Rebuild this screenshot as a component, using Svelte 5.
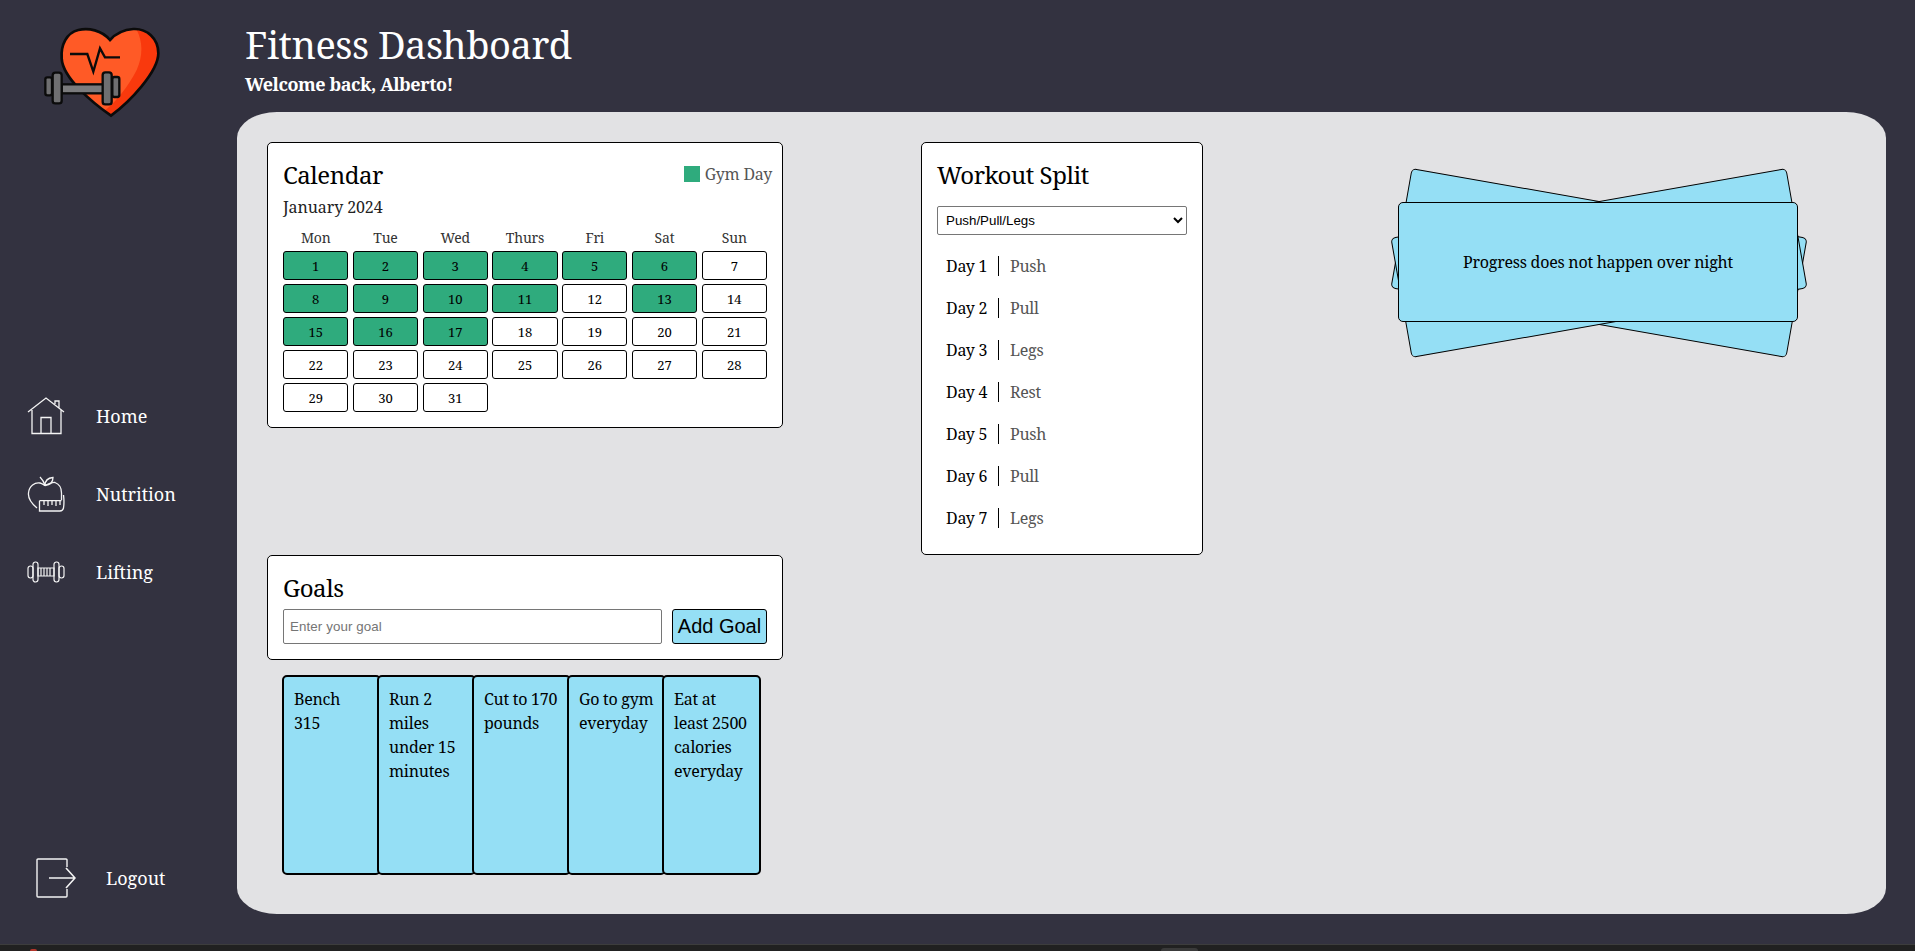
<script>
  const days = Array.from({ length: 31 }, (_, i) => i + 1);
  const gym = [1, 2, 3, 4, 5, 6, 8, 9, 10, 11, 13, 15, 16, 17];
  const heads = ['Mon', 'Tue', 'Wed', 'Thurs', 'Fri', 'Sat', 'Sun'];
  const split = ['Push', 'Pull', 'Legs', 'Rest', 'Push', 'Pull', 'Legs'];
  const goals = ['Bench 315', 'Run 2 miles under 15 minutes', 'Cut to 170 pounds', 'Go to gym everyday', 'Eat at least 2500 calories everyday'];
</script>

<div class="page">
  <aside class="side">
    <svg class="logo" viewBox="0 0 450 345" aria-label="Fitness logo">
      <path d="M240,75 C215,45 175,38 145,45 C110,53 92,90 95,130 C98,190 190,265 243,302 C300,260 385,170 385,115 C385,70 350,40 310,42 C280,44 255,58 240,75Z" fill="#ff5a26"/>
      <path d="M320,44 C338,80 340,120 320,165 C295,215 255,265 222,288 L243,302 C300,260 385,170 385,115 C385,75 355,45 320,44Z" fill="#f9390d"/>
      <path d="M240,75 C215,45 175,38 145,45 C110,53 92,90 95,130 C98,190 190,265 243,302 C300,260 385,170 385,115 C385,70 350,40 310,42 C280,44 255,58 240,75Z" fill="none" stroke="#0b0b0b" stroke-width="8"/>
      <path d="M120,117 H172 L190,170 L210,100 L225,127 H270" fill="none" stroke="#0b0b0b" stroke-width="7"/>
      <g fill="#6f6f71" stroke="#0b0b0b" stroke-width="7">
        <rect x="95" y="208" width="125" height="27" fill="#7b7b7d"/>
        <rect x="46" y="187" width="20" height="54" rx="6"/>
        <rect x="68" y="173" width="27" height="92" rx="8"/>
        <rect x="218" y="172" width="27" height="96" rx="8"/>
        <rect x="247" y="186" width="21" height="60" rx="6"/>
      </g>
    </svg>
    <nav class="nav">
      <a class="item">
        <svg viewBox="0 0 38 38" fill="none" stroke="#f4f4f4" stroke-width="1.3">
          <path d="M1,15 L19,1 L37,15 M5,13 V36.5 H34 V13 M14,36.5 V20.5 H24 V36.5 M28,7 V4 H32 V11"/>
        </svg>
        <span>Home</span>
      </a>
      <a class="item">
        <svg viewBox="0 0 38 38" fill="none" stroke="#f4f4f4" stroke-width="1.3">
          <path d="M10,33 C3,27 1,22 1.5,18 C2,11 8,7 13,8 C15,8.5 17,10 18,10.5 C20,9.5 24,7 28,7.5 C32,9 34.5,13 34.5,18 V25"/>
          <path d="M13,2 C15,4 17,7 18,10.5 C18,6 21,3 26,2.5 C26,7 23,10 18,10.5"/>
          <path d="M12.5,25.7 H34.5 M36.5,20 C37,24 37,30 36.5,33 C36,35 35,36 33,36 H12.5 V25.7 M17,25.7 V30 M21,25.7 V31 M25,25.7 V30 M29,25.7 V31 M33,25.7 V30"/>
        </svg>
        <span>Nutrition</span>
      </a>
      <a class="item">
        <svg viewBox="0 0 38 24" fill="none" stroke="#f4f4f4" stroke-width="1.2">
          <path d="M11,8 H27 V16 H11 Z M14,8 V16 M17,8 V16 M20,8 V16 M23,8 V16"/>
          <rect x="6" y="2" width="5" height="20" rx="2.4"/>
          <rect x="27" y="2" width="5" height="20" rx="2.4"/>
          <rect x="1" y="6" width="5" height="12" rx="2.4"/>
          <rect x="32" y="6" width="5" height="12" rx="2.4"/>
        </svg>
        <span>Lifting</span>
      </a>
    </nav>
    <a class="item logout">
      <svg viewBox="0 0 40 40" fill="none" stroke="#f4f4f4" stroke-width="1.4">
        <path d="M31,9 V2 Q31,1 30,1 H2 Q1,1 1,2 V38 Q1,39 2,39 H30 Q31,39 31,38 V31"/>
        <path d="M13,20 H39 M30,10 L39,20 L30,30" stroke-width="1.6"/>
      </svg>
      <span>Logout</span>
    </a>
  </aside>

  <div class="content">
    <header class="head">
      <h1>Fitness Dashboard</h1>
      <p>Welcome back, Alberto!</p>
    </header>
    <main class="panel">
      <section class="card calendar">
        <div class="calhead">
          <h2>Calendar</h2>
          <div class="legend"><i></i>Gym Day</div>
        </div>
        <div class="month">January 2024</div>
        <div class="grid">
          {#each heads as h}<div class="dow">{h}</div>{/each}
          {#each days as d}<div class="day" class:on={gym.includes(d)}>{d}</div>{/each}
        </div>
      </section>

      <section class="card split">
        <h2>Workout Split</h2>
        <select class="sel"><option>Push/Pull/Legs</option></select>
        <ul>
          {#each split as s, i}
            <li><b>Day {i + 1}</b><span>{s}</span></li>
          {/each}
        </ul>
      </section>

      <div class="quote">
        <div class="q a"></div>
        <div class="q b"></div>
        <div class="q top">Progress does not happen over night</div>
      </div>

      <div class="goalcol">
        <section class="card goals">
          <h2>Goals</h2>
          <div class="form">
            <input placeholder="Enter your goal" />
            <button>Add Goal</button>
          </div>
        </section>
        <div class="notes">
          {#each goals as g}<div class="note">{g}</div>{/each}
        </div>
      </div>
    </main>
  </div>
  <div class="strip"><i class="red"></i><i class="tab"></i></div>
</div>

<style>
  :global(body) { margin: 0; background: #333240; overflow: hidden; }
  * { box-sizing: border-box; }
  .page {
    width: 1915px; height: 951px; display: grid;
    grid-template-columns: 237px 1fr; grid-template-rows: 944px 7px;
    font-family: "Noto Serif", "DejaVu Serif", serif; color: #000;
  }
  .side { display: flex; flex-direction: column; padding: 15px 0 0 0; color: #fff; }
  .logo { display: block; width: 150px; height: 115px; margin-left: 30px; filter: blur(0.4px); }
  .nav { display: flex; flex-direction: column; margin-top: 267px; }
  .item { display: flex; align-items: center; height: 38px; padding-left: 27px; color: #fff; font-size: 18px; }
  .nav .item + .item { margin-top: 40px; }
  .item svg { width: 38px; height: 38px; margin-right: 31px; flex: none; }
  .nav .item:last-child svg { height: 24px; }
  .logout { margin-top: 267px; padding-left: 36px; height: 40px; }
  .logout svg { width: 40px; height: 40px; margin-right: 30px; }
  .content { display: flex; flex-direction: column; padding-right: 29px; }
  .head { height: 112px; padding: 19px 0 0 8px; color: #fff; }
  h1 { margin: 0; font-size: 38px; font-weight: 400; line-height: 50px; letter-spacing: -0.5px; }
  .head p { margin: 4px 0 0; font-size: 18px; font-weight: 700; line-height: 22px; letter-spacing: -0.45px; }
  .panel {
    height: 802px; background: #e2e2e4; border-radius: 40px / 26px; padding: 30px;
    display: grid; grid-template-columns: 654px 477px 400px; grid-template-rows: 413px auto;
  }
  .card { background: #fff; border: 1px solid #000; border-radius: 5px; padding: 15px; }
  h2 { margin: 0; font-size: 24px; font-weight: 400; line-height: 33px; letter-spacing: -0.45px; }
  .calendar { width: 516px; height: 286px; }
  .calhead { display: flex; justify-content: space-between; align-items: flex-start; margin-right: -5px; }
  .legend { display: flex; align-items: center; gap: 5px; font-size: 16px; color: #555; line-height: 22px; padding-top: 5px; letter-spacing: -0.25px; }
  .legend i { width: 16px; height: 16px; background: #2fab7d; }
  .month { font-size: 16px; line-height: 22px; color: #222; margin-top: 5px; letter-spacing: -0.1px; }
  .grid { display: grid; grid-template-columns: repeat(7, 1fr); width: 484px; column-gap: 4.3px; row-gap: 4px; margin-top: 10px; }
  .dow { text-align: center; font-size: 14px; line-height: 20px; color: #333; margin-bottom: -1px; letter-spacing: -0.2px; }
  .day {
    height: 29px; border: 1px solid #000; border-radius: 3px; background: #fff;
    font-size: 13px; display: flex; align-items: center; justify-content: center;
  }
  .day.on { background: #2fab7d; }
  .split { width: 282px; height: 413px; }
  .sel {
    display: block; width: 250px; height: 29px; margin: 15px 0 0 0; padding: 0 4px;
    font: 13.33px "Liberation Sans", sans-serif; background: #fff; border: 1px solid #767676; border-radius: 2px; color: #000;
  }
  ul { list-style: none; margin: 10px 0 0; padding: 0; }
  li { display: flex; align-items: center; height: 42px; padding-left: 9px; font-size: 16px; letter-spacing: -0.25px; }
  li b { font-weight: 400; width: 42px; white-space: nowrap; margin-right: 10px; }
  li span { border-left: 1px solid #000; padding-left: 11px; height: 20px; line-height: 20px; color: #555; }
  .quote { position: relative; width: 400px; height: 120px; margin-top: 60px; }
  .q {
    position: absolute; inset: 0; background: #95dff5; border: 1px solid #000; border-radius: 5px;
    display: flex; align-items: center; justify-content: center; font-size: 16px; letter-spacing: -0.25px;
  }
  .a { inset: 0 -2px -2px 0; transform: rotate(10deg); }
  .b { inset: 0 -2px -2px 0; transform: rotate(-10deg); }
  .goalcol { grid-column: 1; grid-row: 2; }
  .goals { width: 516px; height: 105px; }
  .form { display: flex; gap: 10px; margin-top: 5px; }
  input {
    width: 379px; height: 35px; padding: 0 6px; border: 1px solid #767676; border-radius: 2px;
    font: 13.33px "Liberation Sans", sans-serif; background: #fff; letter-spacing: 0.1px;
  }
  input::placeholder { color: #757575; }
  button {
    width: 95px; height: 35px; padding: 0; border: 1px solid #000; border-radius: 3px; background: #95dff5;
    font: 20px "Liberation Sans", sans-serif; color: #000;
  }
  .notes { display: flex; margin: 15px 0 0 15px; }
  .note {
    width: 99px; height: 200px; flex: none; background: #95dff5; border: 2px solid #000; border-radius: 5px;
    padding: 10px 11px 10px 10px; font-size: 16px; line-height: 24px; letter-spacing: -0.25px;
  }
  .note:nth-child(4) { padding-right: 4px; }
  .note + .note { margin-left: -4px; }
  .strip { grid-column: 1 / -1; background: #212121; border-top: 1px solid #3d3d3d; display: flex; align-items: flex-end; padding-left: 30px; gap: 1124px; overflow: hidden; }
  .strip i { display: block; }
  .red { width: 7px; height: 2px; background: #b3362c; border-radius: 3px 3px 0 0; }
  .tab { width: 37px; height: 3px; background: #3a3a3a; border-radius: 4px 4px 0 0; }
</style>
